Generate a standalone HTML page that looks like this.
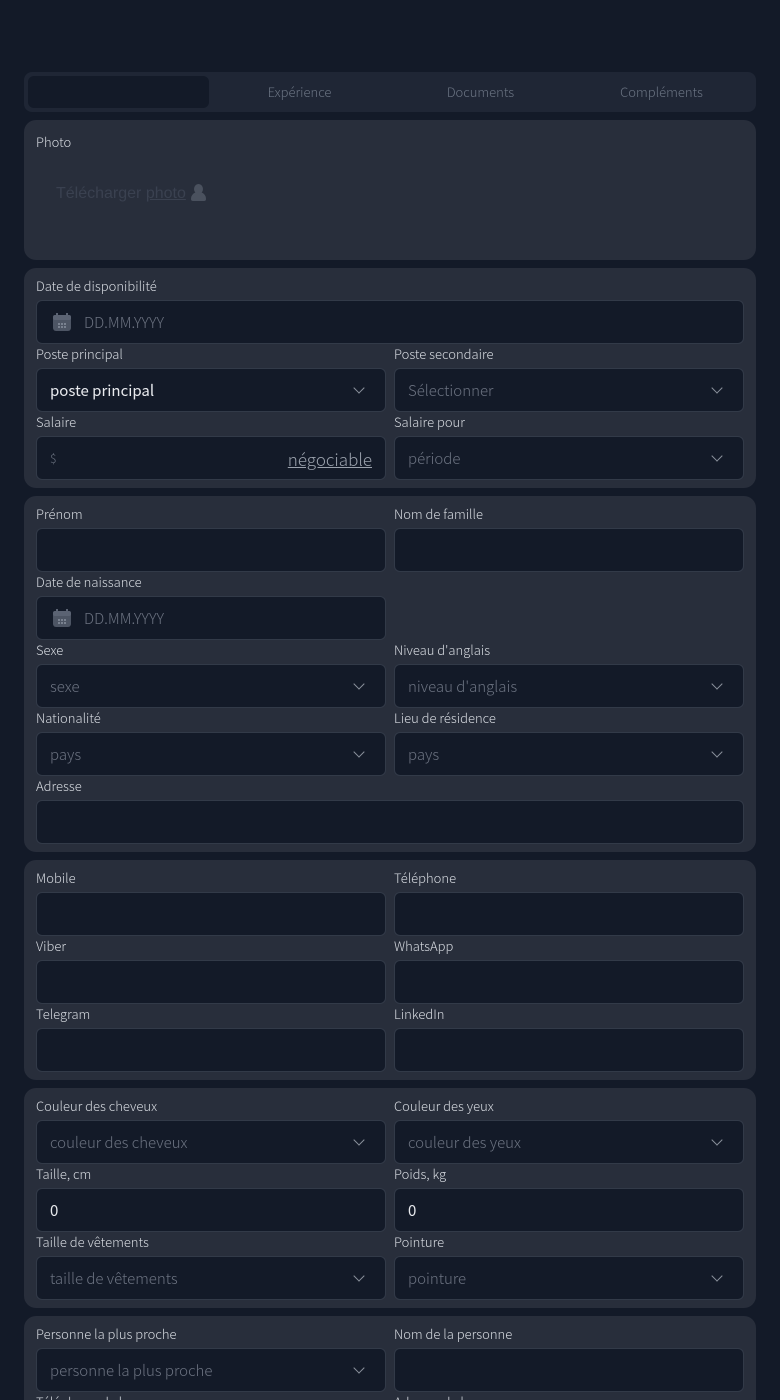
<!DOCTYPE html>
<html style="width:780px;height:1400px;overflow:hidden"><head><meta charset="utf-8"><style>
*{box-sizing:border-box;margin:0;padding:0}
body{width:780px;height:1400px;overflow:hidden;background:#131a28;font-family:"Noto Sans CJK JP","Liberation Sans",sans-serif;position:relative}
.card{position:absolute;left:24px;width:732px;background:#282e3b;border-radius:12px}
.l{position:absolute;font-size:13px;line-height:16px;color:#d6dae0;font-weight:300}
.i{position:absolute;height:44px;background:#131a28;border:1px solid #323a48;border-radius:6px;font-size:15px;line-height:44px;padding-left:13px;color:#6b7280;font-weight:300}
.i.v{color:#e8eaee;font-weight:400}
.i.s::after{content:"";position:absolute;right:22px;top:15px;width:7px;height:7px;border-right:1.5px solid #8a919c;border-bottom:1.5px solid #8a919c;transform:rotate(45deg)}
.L{left:36px;width:350px}.R{left:394px;width:350px}.F{left:36px;width:708px}
.cal{position:absolute;left:15px;top:11px;width:20px;height:20px}
.tabs{position:absolute;left:24px;top:72px;width:732px;height:40px;background:#1f2635;border-radius:8px}
.tab{position:absolute;top:0;height:40px;line-height:40px;width:181px;text-align:center;font-size:13px;color:#6b7483;font-weight:300}
</style></head><body>
<div class="tabs">
<div style="position:absolute;left:4px;top:4px;width:181px;height:32px;background:#131a28;border-radius:6px"></div>
<div class="tab" style="left:185px">Expérience</div>
<div class="tab" style="left:366px">Documents</div>
<div class="tab" style="left:547px">Compléments</div>
</div>

<div class="card" style="top:120px;height:140px"></div>
<div class="l" style="left:36px;top:134px">Photo</div>
<div style="position:absolute;left:56px;top:184px;font-family:'Liberation Sans',sans-serif;font-size:16px;color:#3a4150">Télécharger <span style="text-decoration:underline">photo</span> <span style="display:inline-block;width:16px;height:16px;vertical-align:-2px;position:relative"><span style="position:absolute;left:4px;top:0;width:9px;height:10px;border-radius:50%;background:#4a515e"></span><span style="position:absolute;left:1px;top:8px;width:15px;height:9px;border-radius:7px 7px 2px 2px;background:#4a515e"></span></span></div>

<div class="card" style="top:268px;height:220px"></div>
<div class="l" style="left:36px;top:278px">Date de disponibilité</div>
<div class="i F" style="top:300px;padding-left:47px"><svg class="cal" viewBox="0 0 20 20"><rect x="1" y="3" width="18" height="16" rx="3" fill="#4d5564"/><rect x="1" y="3" width="18" height="5" rx="2" fill="#5b6373"/><rect x="4" y="1" width="2" height="4" fill="#5b6373"/><rect x="14" y="1" width="2" height="4" fill="#5b6373"/><g fill="#7a8290"><rect x="6" y="11" width="2" height="2"/><rect x="9" y="11" width="2" height="2"/><rect x="12" y="11" width="2" height="2"/><rect x="6" y="14" width="2" height="2"/><rect x="9" y="14" width="2" height="2"/><rect x="12" y="14" width="2" height="2"/></g></svg>DD.MM.YYYY</div>
<div class="l" style="left:36px;top:346px">Poste principal</div>
<div class="l" style="left:394px;top:346px">Poste secondaire</div>
<div class="i L s v" style="top:368px">poste principal</div>
<div class="i R s" style="top:368px">Sélectionner</div>
<div class="l" style="left:36px;top:414px">Salaire</div>
<div class="l" style="left:394px;top:414px">Salaire pour</div>
<div class="i L" style="top:436px;font-size:12px">$<span style="position:absolute;right:13px;top:0;font-size:17px;color:#9aa1ac;text-decoration:underline">négociable</span></div>
<div class="i R s" style="top:436px">période</div>

<div class="card" style="top:496px;height:356px"></div>
<div class="l" style="left:36px;top:506px">Prénom</div>
<div class="l" style="left:394px;top:506px">Nom de famille</div>
<div class="i L" style="top:528px"></div>
<div class="i R" style="top:528px"></div>
<div class="l" style="left:36px;top:574px">Date de naissance</div>
<div class="i L" style="top:596px;padding-left:47px"><svg class="cal" viewBox="0 0 20 20"><rect x="1" y="3" width="18" height="16" rx="3" fill="#4d5564"/><rect x="1" y="3" width="18" height="5" rx="2" fill="#5b6373"/><rect x="4" y="1" width="2" height="4" fill="#5b6373"/><rect x="14" y="1" width="2" height="4" fill="#5b6373"/><g fill="#7a8290"><rect x="6" y="11" width="2" height="2"/><rect x="9" y="11" width="2" height="2"/><rect x="12" y="11" width="2" height="2"/><rect x="6" y="14" width="2" height="2"/><rect x="9" y="14" width="2" height="2"/><rect x="12" y="14" width="2" height="2"/></g></svg>DD.MM.YYYY</div>
<div class="l" style="left:36px;top:642px">Sexe</div>
<div class="l" style="left:394px;top:642px">Niveau d'anglais</div>
<div class="i L s" style="top:664px">sexe</div>
<div class="i R s" style="top:664px">niveau d'anglais</div>
<div class="l" style="left:36px;top:710px">Nationalité</div>
<div class="l" style="left:394px;top:710px">Lieu de résidence</div>
<div class="i L s" style="top:732px">pays</div>
<div class="i R s" style="top:732px">pays</div>
<div class="l" style="left:36px;top:778px">Adresse</div>
<div class="i F" style="top:800px"></div>

<div class="card" style="top:860px;height:220px"></div>
<div class="l" style="left:36px;top:870px">Mobile</div>
<div class="l" style="left:394px;top:870px">Téléphone</div>
<div class="i L" style="top:892px"></div>
<div class="i R" style="top:892px"></div>
<div class="l" style="left:36px;top:938px">Viber</div>
<div class="l" style="left:394px;top:938px">WhatsApp</div>
<div class="i L" style="top:960px"></div>
<div class="i R" style="top:960px"></div>
<div class="l" style="left:36px;top:1006px">Telegram</div>
<div class="l" style="left:394px;top:1006px">LinkedIn</div>
<div class="i L" style="top:1028px"></div>
<div class="i R" style="top:1028px"></div>

<div class="card" style="top:1088px;height:220px"></div>
<div class="l" style="left:36px;top:1098px">Couleur des cheveux</div>
<div class="l" style="left:394px;top:1098px">Couleur des yeux</div>
<div class="i L s" style="top:1120px">couleur des cheveux</div>
<div class="i R s" style="top:1120px">couleur des yeux</div>
<div class="l" style="left:36px;top:1166px">Taille, cm</div>
<div class="l" style="left:394px;top:1166px">Poids, kg</div>
<div class="i L v" style="top:1188px">0</div>
<div class="i R v" style="top:1188px">0</div>
<div class="l" style="left:36px;top:1234px">Taille de vêtements</div>
<div class="l" style="left:394px;top:1234px">Pointure</div>
<div class="i L s" style="top:1256px">taille de vêtements</div>
<div class="i R s" style="top:1256px">pointure</div>

<div class="card" style="top:1316px;height:84px;border-radius:12px 12px 0 0"></div>
<div class="l" style="left:36px;top:1326px">Personne la plus proche</div>
<div class="l" style="left:394px;top:1326px">Nom de la personne</div>
<div class="i L s" style="top:1348px">personne la plus proche</div>
<div class="i R" style="top:1348px"></div>
<div class="l" style="left:36px;top:1394px;height:6px;overflow:hidden">Téléphone de la personne</div>
<div class="l" style="left:394px;top:1394px;height:6px;overflow:hidden">Adresse de la personne</div>
</body></html>
